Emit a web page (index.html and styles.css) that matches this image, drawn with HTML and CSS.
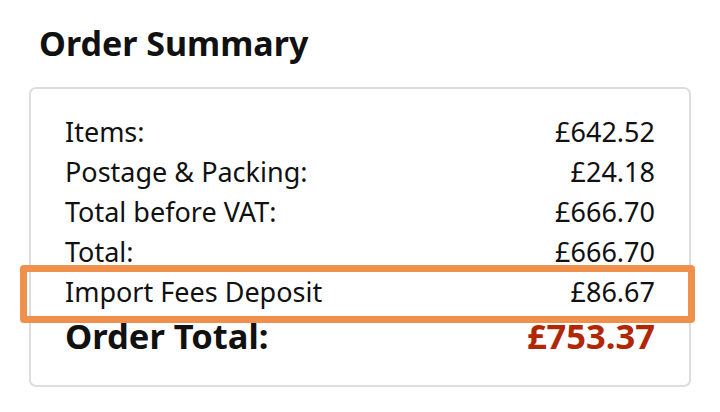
FILE: index.html
```html
<!DOCTYPE html>
<html lang="en">
<head>
<meta charset="utf-8">
<title>Order Summary</title>
<link rel="stylesheet" href="styles.css">
</head>
<body>
<div class="page">
  <h1 class="title">Order Summary</h1>
  <div class="card">
    <div class="row"><span>Items:</span><span>£642.52</span></div>
    <div class="row"><span>Postage &amp; Packing:</span><span>£24.18</span></div>
    <div class="row"><span>Total before VAT:</span><span>£666.70</span></div>
    <div class="row"><span>Total:</span><span>£666.70</span></div>
    <div class="row highlighted"><span>Import Fees Deposit</span><span>£86.67</span></div>
    <div class="row total"><span>Order Total:</span><span class="price">£753.37</span></div>
  </div>
</div>
</body>
</html>
```
FILE: styles.css
```css
html, body {
  margin: 0;
  padding: 0;
  background: #ffffff;
}
body {
  font-family: "Noto Sans", "Open Sans", sans-serif;
  color: #111111;
  width: 720px;
  height: 412px;
  overflow: hidden;
}
.page {
  padding: 20px 29px 0 29px;
}
.title {
  margin: 0 0 21px 10px;
  font-size: 34px;
  line-height: 46px;
  font-weight: 700;
  color: #111111;
}
.card {
  border: 2px solid #dddddd;
  border-radius: 7px;
  padding: 23px 34px 25px 34px;
}
.row {
  display: flex;
  justify-content: space-between;
  font-size: 27px;
  line-height: 40px;
}
.highlighted {
  position: relative;
}
.highlighted::after {
  content: "";
  position: absolute;
  left: -45px;
  right: -40px;
  top: -7px;
  bottom: -11px;
  border: 7px solid #ef914c;
  border-radius: 4px;
}
.total {
  font-size: 34.5px;
  font-weight: 700;
  line-height: 48px;
}
.price {
  color: #b12704;
}
```
